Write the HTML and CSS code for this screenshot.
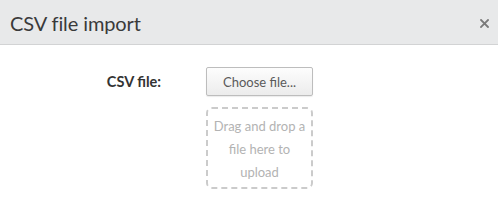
FILE: index.html
```html
<!DOCTYPE html>
<html>
<head>
<meta charset="utf-8">
<link rel="stylesheet" href="styles.css">
</head>
<body>
<div class="dialog">
  <div class="header">
    <h1 class="title">CSV file import</h1>
    <svg class="close" width="9" height="9" viewBox="0 0 9 9"><path d="M1 1 L8 8 M8 1 L1 8" stroke="#7a7a7a" stroke-width="1.8" stroke-linecap="square"/></svg>
  </div>
  <div class="body">
    <div class="row">
      <label class="label">CSV file:</label>
      <div class="field">
        <button class="choose">Choose file...</button>
        <div class="dropzone">Drag and drop a file here to upload</div>
      </div>
    </div>
  </div>
</div>
</body>
</html>
```
FILE: styles.css
```css
html, body {
  margin: 0;
  padding: 0;
  background: #fff;
}
.dialog {
  width: 498px;
  height: 209px;
  font-family: "Lato", "Open Sans", sans-serif;
  color: #333;
}
.header {
  height: 44px;
  background: #e8e9ea;
  border-bottom: 1px solid #d2d3d4;
  display: flex;
  align-items: center;
  justify-content: space-between;
  padding: 0 9px 0 10px;
}
.title {
  margin: 0;
  font-weight: 400;
  font-size: 20px;
  color: #3a3a3a;
  letter-spacing: -0.1px;
  padding-top: 1px;
}
.close {
  display: block;
  margin-top: 2px;
}
.body {
  padding-top: 22px;
}
.row {
  display: flex;
  align-items: flex-start;
}
.label {
  width: 161px;
  text-align: right;
  font-weight: 700;
  font-size: 14.5px;
  color: #333;
  padding-top: 6px;
}
.field {
  margin-left: 45px;
  display: flex;
  flex-direction: column;
  width: 107px;
}
.choose {
  width: 107px;
  height: 29px;
  border: 1px solid #bdbdbd;
  border-radius: 2px;
  background: linear-gradient(#fdfdfd, #ececec);
  box-shadow: 0 1px 1px rgba(0,0,0,0.08);
  color: #5a5a5a;
  font-family: inherit;
  font-size: 13px;
  padding: 0;
}
.dropzone {
  margin-top: 11px;
  height: 82px;
  box-sizing: border-box;
  border: 2px dashed #cbcbcb;
  border-radius: 6px;
  color: #b3b3b3;
  font-size: 13px;
  line-height: 23px;
  text-align: center;
  padding: 6px 2px 0;
}
```
